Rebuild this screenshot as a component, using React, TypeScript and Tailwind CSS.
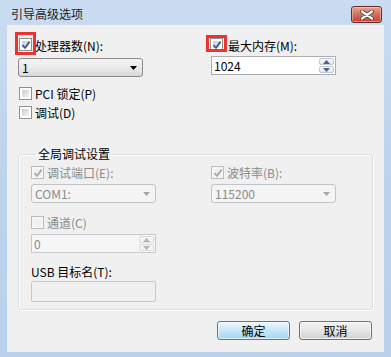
import clsx from "clsx";
import type { ReactNode } from "react";

const font = { fontFamily: '"Noto Sans CJK SC", "Noto Sans", sans-serif' };

function Check({ checked, disabled }: { checked?: boolean; disabled?: boolean }) {
  return (
    <span
      className={clsx(
        "relative flex h-[13px] w-[13px] shrink-0 items-center justify-center border p-[2px]",
        disabled ? "border-[#bcbcbc] bg-[#f6f6f6]" : "border-[#8e8f8f] bg-white"
      )}
    >
      <span
        className={clsx(
          "block h-full w-full",
          disabled ? "bg-[#f0f0f0]" : "bg-gradient-to-br from-[#c9ccd1] to-[#f5f5f6]"
        )}
      />
      {checked && (
        <svg className="absolute left-[1px] top-[1px]" width="10" height="10" viewBox="0 0 10 10">
          <path
            d="M1.5 5.2 L4 7.8 L8.6 1.6"
            fill="none"
            stroke={disabled ? "#a9a9a9" : "#3f5691"}
            strokeWidth="1.8"
          />
        </svg>
      )}
    </span>
  );
}

function Marked({ children, box }: { children: ReactNode; box: string }) {
  return (
    <span className="relative flex shrink-0">
      {children}
      <span className={clsx("pointer-events-none absolute border-[3px] border-[#e8352f]", box)} />
    </span>
  );
}

function Combo({ value, disabled }: { value: string; disabled?: boolean }) {
  return (
    <div
      className={clsx(
        "flex h-[19px] w-[125px] items-center justify-between rounded-[3px] border pl-[3px] pr-[5px] text-[12px] leading-none",
        disabled
          ? "border-[#c1c4c7] bg-[#f4f4f4] text-[#8a8a8a]"
          : "border-[#8a8a8a] bg-gradient-to-b from-[#f4f4f4] via-[#ebebeb] to-[#d8d8d8] text-black"
      )}
    >
      <span className="pt-[1px]">{value}</span>
      <svg width="7" height="4" viewBox="0 0 7 4">
        <path d="M0 0 H7 L3.5 4 Z" fill={disabled ? "#a6a6a6" : "#000"} />
      </svg>
    </div>
  );
}

function Spin({ value, disabled }: { value: string; disabled?: boolean }) {
  const arrow = disabled ? "#b4b4b4" : "#4d6185";
  return (
    <div
      className={clsx(
        "flex h-[19px] w-[125px] items-stretch border text-[12px] leading-none",
        disabled ? "border-[#c6c8cb] bg-[#f6f6f6] text-[#8a8a8a]" : "border-[#abadb3] bg-white text-black"
      )}
    >
      <span className="flex flex-1 items-center pl-[2px] pt-[1px]">{value}</span>
      <span className="flex w-[17px] flex-col gap-[1px] p-[1px]">
        {["M0 4 L3.5 0 L7 4 Z", "M0 0 H7 L3.5 4 Z"].map((d) => (
          <span
            key={d}
            className={clsx(
              "flex flex-1 items-center justify-center rounded-[2px] border",
              disabled ? "border-[#dcdcdc] bg-[#f4f4f4]" : "border-[#c3c9d2] bg-gradient-to-b from-[#f8f8f8] to-[#e3e6ea]"
            )}
          >
            <svg width="7" height="4" viewBox="0 0 7 4">
              <path d={d} fill={arrow} />
            </svg>
          </span>
        ))}
      </span>
    </div>
  );
}

function Row({ children, className }: { children: ReactNode; className?: string }) {
  return <div className={clsx("flex h-[19px] items-center text-[12px] leading-none", className)}>{children}</div>;
}

export default function App() {
  return (
    <div
      className="flex h-[357px] w-[391px] flex-col bg-gradient-to-b from-[#c9dcf1] via-[#bcd3ec] to-[#b9d1ea]"
      style={font}
    >
      {/* title bar */}
      <div className="flex h-[25px] shrink-0 items-start justify-between pl-[11px] pr-[9px]">
        <span className="pt-[8px] text-[12px] leading-none text-[#1b1b1b]">引导高级选项</span>
        <div className="mt-[6px] flex h-[17px] w-[31px] items-center justify-center rounded-[3px] border border-[#6a2b26] bg-gradient-to-b from-[#e6a394] via-[#d26e5c] to-[#c4442f] shadow-[inset_0_0_0_1px_rgba(255,220,210,0.45)]">
          <svg width="14" height="10" viewBox="0 0 14 10">
            <path d="M2 1.5 L12 8.5 M12 1.5 L2 8.5" stroke="#4a3a3a" strokeWidth="3.8" strokeLinecap="round" />
            <path d="M2 1.5 L12 8.5 M12 1.5 L2 8.5" stroke="#fff" strokeWidth="2.2" strokeLinecap="round" />
          </svg>
        </div>
      </div>

      {/* client area */}
      <div className="mx-[7px] flex h-[327px] shrink-0 flex-col bg-[#f0f0f0] text-black">
        <div className="mt-[8px] flex pl-[8px]">
          <div className="flex w-[191px] flex-col">
            <div className="flex h-[23px] items-center">
              <span className="ml-[4px]">
                <Marked box="-left-[4px] -top-[6px] h-[23px] w-[21px]">
                  <Check checked />
                </Marked>
              </span>
              <span className="ml-[3px] pt-[2px] text-[12px] leading-none">处理器数(N):</span>
            </div>
            <div className="ml-[3px] mt-[2px]">
              <Combo value="1" />
            </div>
            <Row className="mt-[7px] pl-[4px]">
              <Check />
              <span className="ml-[3px]">PCI 锁定(P)</span>
            </Row>
            <Row className="pl-[4px]">
              <Check />
              <span className="ml-[3px]">调试(D)</span>
            </Row>
          </div>
          <div className="flex flex-col">
            <div className="flex h-[23px] items-center">
              <span className="ml-[4px]">
                <Marked box="-left-[4px] -top-[3px] h-[17px] w-[21px]">
                  <Check checked />
                </Marked>
              </span>
              <span className="ml-[5px] pt-[2px] text-[12px] leading-none">最大内存(M):</span>
            </div>
            <div className="ml-[5px]">
              <Spin value="1024" />
            </div>
          </div>
        </div>

        <fieldset className="ml-[11px] mt-[24px] w-[355px] rounded-[3px] border border-[#d5dfe5] pb-[7px] pl-[12px] shadow-[inset_1px_1px_0_#fff,1px_1px_0_#fff]">
          <legend className="ml-[5px] h-[16px] px-[2px] text-[12px] leading-[16px]">全局调试设置</legend>
          <div className="mt-[1px] flex">
            <div className="flex w-[180px] flex-col">
              <Row className="text-[#8a8a8a]">
                <Check checked disabled />
                <span className="ml-[3px]">调试端口(E):</span>
              </Row>
              <div className="mt-[2px]">
                <Combo value="COM1:" disabled />
              </div>
            </div>
            <div className="flex flex-col">
              <Row className="text-[#8a8a8a]">
                <Check checked disabled />
                <span className="ml-[3px]">波特率(B):</span>
              </Row>
              <div className="mt-[2px]">
                <Combo value="115200" disabled />
              </div>
            </div>
          </div>
          <Row className="mt-[10px] text-[#8a8a8a]">
            <Check disabled />
            <span className="ml-[3px]">通道(C)</span>
          </Row>
          <div className="mt-[2px]">
            <Spin value="0" disabled />
          </div>
          <div className="mt-[10px] flex h-[18px] items-center text-[12px] leading-none">USB 目标名(T):</div>
          <div className="h-[21px] w-[125px] rounded-[2px] border border-[#c6c8cb] bg-[#f0f0f0]" />
        </fieldset>

        <div className="mt-[11px] flex justify-end gap-[9px] pr-[12px]">
          <button
            type="button"
            className="flex h-[19px] w-[73px] items-center justify-center rounded-[3px] border border-[#3c7fb1] bg-gradient-to-b from-[#ecf7fd] via-[#c6e7f8] to-[#a2d6f2] text-[12px] leading-none text-black shadow-[inset_0_0_0_1px_rgba(255,255,255,0.6)]"
          >
            确定
          </button>
          <button
            type="button"
            className="flex h-[19px] w-[73px] items-center justify-center rounded-[3px] border border-[#707070] bg-gradient-to-b from-[#f3f3f3] via-[#e6e6e6] to-[#d0d0d0] text-[12px] leading-none text-black shadow-[inset_0_0_0_1px_rgba(255,255,255,0.7)]"
          >
            取消
          </button>
        </div>
      </div>
    </div>
  );
}
